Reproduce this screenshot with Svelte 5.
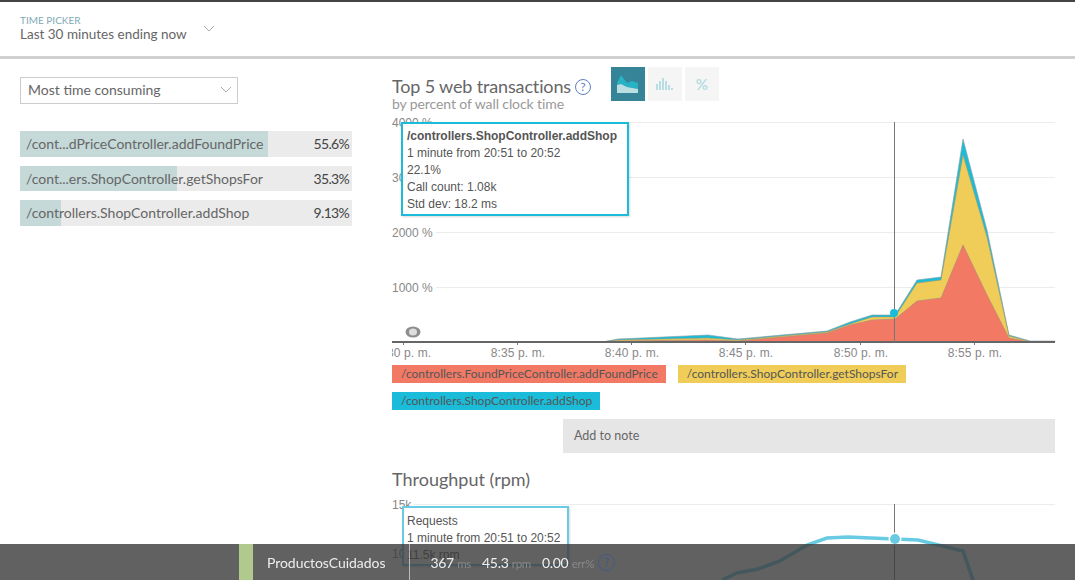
<script>
	let transactions = [
		{ name: "/cont...dPriceController.addFoundPrice", pct: "55.6%", width: 74.7 },
		{ name: "/cont...ers.ShopController.getShopsFor", pct: "35.3%", width: 47.3 },
		{ name: "/controllers.ShopController.addShop", pct: "9.13%", width: 12.3 },
	];

	let legend = [
		{ name: "/controllers.FoundPriceController.addFoundPrice", color: "#f27a65" },
		{ name: "/controllers.ShopController.getShopsFor", color: "#efcd58" },
		{ name: "/controllers.ShopController.addShop", color: "#1abcd9" },
	];

	// chart coordinates: x starts at page x=392, y at page y=122
	const bluePts = "210,220 226,217 316,213 346,217 435,209 458,200 480,193 503,193 525,158 549,155 571,17 595,108 617,213 638,219 663,219";
	const yellowPts = "210,220 226,218 316,216 346,218 435,210 458,202 480,195 503,195 525,161 549,158 571,33 595,115 617,214 638,219.5 663,220";
	const redPts = "210,220 226,219 316,218 346,219 435,211 458,203 480,198 503,197 525,179 549,176 571,123 595,173 617,216 638,220 663,220";
	const close = "663,220 210,220";

	const ticks = [
		{ x: 12, label: "8:30 p. m." },
		{ x: 126, label: "8:35 p. m." },
		{ x: 240, label: "8:40 p. m." },
		{ x: 354, label: "8:45 p. m." },
		{ x: 469, label: "8:50 p. m." },
		{ x: 583, label: "8:55 p. m." },
	];
</script>

<div class="page">
	<header>
		<div class="picker">
			<span class="picker-label">TIME PICKER</span>
			<span class="picker-value">Last 30 minutes ending now</span>
		</div>
		<svg class="chev" width="12" height="7" viewBox="0 0 12 7"><path d="M1 1l5 5 5-5" /></svg>
	</header>

	<div class="content">
		<aside>
			<div class="select">
				<span>Most time consuming</span>
				<svg class="chev" width="12" height="7" viewBox="0 0 12 7"><path d="M1 1l5 5 5-5" /></svg>
			</div>
			<ul>
				{#each transactions as t}
					<li>
						<div class="fill" style="width: {t.width}%"></div>
						<span class="name">{t.name}</span>
						<span class="pct">{t.pct}</span>
					</li>
				{/each}
			</ul>
		</aside>

		<main>
			<div class="title-row">
				<div class="titles">
					<h2>Top 5 web transactions<span class="help">?</span></h2>
					<p>by percent of wall clock time</p>
				</div>
				<div class="toggles">
					<button class="active" aria-label="Area">
						<svg width="21" height="18" viewBox="0 0 21 18">
							<path d="M0 8L4 0l6 8 5-2 6 2v6l-11-2-6-3-4 1z" fill="#27b3c4" />
							<path d="M0 10l4-1 6 3 11 2v4H0z" fill="#b9dfe3" />
						</svg>
					</button>
					<button aria-label="Bars">
						<svg width="17" height="12" viewBox="0 0 17 12">
							<path d="M0 6h2v6H0zM3 3h2v9H3zM6 0h2v12H6zM9 3h2v9H9zM12 7h2v5h-2zM15 10h2v2h-2z" fill="#b8dde2" />
						</svg>
					</button>
					<button class="pct-btn">%</button>
				</div>
			</div>

			<div class="chart">
				<svg class="plot" width="683" height="240" viewBox="0 0 683 240">
					{#each [0, 55, 110, 165] as y}
						<line x1="0" x2="663" y1={y + 0.5} y2={y + 0.5} stroke="#ececec" />
					{/each}
					<polygon points="{bluePts} {close}" fill="#1abcd9" stroke="#8a9ca0" stroke-width="0.6" />
					<polygon points="{yellowPts} {close}" fill="#efcd58" stroke="#a09a70" stroke-width="0.6" />
					<polygon points="{redPts} {close}" fill="#f27a65" stroke="#a88a80" stroke-width="0.6" />
					<line x1="0" x2="663" y1="220" y2="220" stroke="#666" stroke-width="2" />
					{#each ticks as t}
						<line x1={t.x - 0.5} x2={t.x - 0.5} y1="221" y2="223" stroke="#777" />
					{/each}
					<line x1="502.5" x2="502.5" y1="0" y2="220" stroke="#777" />
					<circle cx="502" cy="191" r="4" fill="#1abcd9" />
					<ellipse cx="21" cy="210" rx="7.5" ry="5.5" fill="#8e8e8e" />
					<ellipse cx="21" cy="210" rx="4" ry="3.5" fill="#dedede" />
				</svg>

				<span class="y-label" style="top: -6px">4000 %</span>
				<span class="y-label" style="top: 49px">3000 %</span>
				<span class="y-label" style="top: 104px">2000 %</span>
				<span class="y-label" style="top: 159px">1000 %</span>

				<div class="x-axis">
					{#each ticks as t}
						<span style="left: {t.x}px">{t.label}</span>
					{/each}
				</div>

				<div class="tip tip-top">
					<b>/controllers.ShopController.addShop</b>
					<span>1 minute from 20:51 to 20:52</span>
					<span>22.1%</span>
					<span>Call count: 1.08k</span>
					<span>Std dev: 18.2 ms</span>
				</div>
			</div>

			<div class="legend">
				{#each legend as l}
					<span style="background: {l.color}">{l.name}</span>
				{/each}
			</div>

			<div class="note">Add to note</div>

			<h2 class="second">Throughput (rpm)</h2>
			<div class="chart small">
				<svg class="plot" width="663" height="90" viewBox="0 0 663 90">
					<line x1="13" x2="663" y1="0.5" y2="0.5" stroke="#ececec" />
					<polyline points="330,76 345,69 366,65 388,57 415,41 435,34 456,33 502,35 526,36 571,47 581,76" fill="none" stroke="#68cbe3" stroke-width="3.5" />
					<line x1="502.5" x2="502.5" y1="0" y2="90" stroke="#777" />
					<circle cx="503" cy="35" r="6.5" fill="#fff" />
					<circle cx="503" cy="35" r="5" fill="#68cbe3" />
				</svg>
				<span class="y-label" style="top: -6px">15k</span>
				<span class="y-label" style="top: 43px">10</span>
				<div class="tip tip-bottom">
					<span>Requests</span>
					<span>1 minute from 20:51 to 20:52</span>
					<span>11.5k rpm</span>
				</div>
			</div>
		</main>
	</div>

	<footer>
		<i class="status"></i>
		<span class="app">ProductosCuidados</span>
		<i class="cursor"></i>
		<span class="stat first">367 <small>ms</small></span>
		<span class="stat">45.3 <small>rpm</small></span>
		<span class="stat last">0.00 <small>err%</small></span>
		<span class="help dark">?</span>
	</footer>
</div>

<style>
	:global(body) {
		margin: 0;
		background: #fff;
		overflow: hidden;
	}

	.page {
		height: 580px;
		overflow: hidden;
		font-family: Lato, "Noto Sans", sans-serif;
		color: #666;
	}

	header {
		display: flex;
		align-items: center;
		gap: 16px;
		box-sizing: border-box;
		height: 59px;
		padding: 0 0 5px 20px;
		border-top: 2px solid #444;
		border-bottom: 3px solid #d0d0d0;
	}

	.picker {
		display: flex;
		flex-direction: column;
		line-height: 14px;
	}

	.picker-label {
		font-size: 10px;
		color: #7faab5;
	}

	.picker-value {
		font-size: 13.5px;
		color: #666;
	}

	.chev {
		fill: none;
		stroke: #aaa;
	}

	header .chev {
		margin-top: 3px;
	}

	.content {
		display: flex;
		padding: 18px 20px 0;
		gap: 40px;
	}

	aside {
		flex: 0 0 332px;
	}

	.select {
		display: flex;
		align-items: center;
		justify-content: space-between;
		box-sizing: border-box;
		width: 218px;
		height: 27px;
		padding: 0 5px 2px 7px;
		border: 1px solid #ccc;
		font-size: 14px;
		color: #666;
	}

	ul {
		list-style: none;
		margin: 27px 0 0;
		padding: 0;
		display: flex;
		flex-direction: column;
		gap: 9px;
	}

	li {
		position: relative;
		display: flex;
		justify-content: space-between;
		align-items: center;
		height: 25.5px;
		padding: 0 3px 0 6px;
		background: #ebebeb;
		font-size: 14px;
		color: #666;
	}

	.fill {
		position: absolute;
		left: 0;
		top: 0;
		bottom: 0;
		background: #c4d9d8;
	}

	.name,
	.pct {
		position: relative;
	}

	.pct {
		color: #444;
		letter-spacing: -0.7px;
	}

	main {
		flex: 1;
		min-width: 0;
	}

	.title-row {
		display: flex;
		gap: 20px;
		margin-top: -10px;
	}

	.titles {
		padding-top: 8px;
	}

	h2 {
		margin: 0;
		font-size: 18px;
		font-weight: 400;
		line-height: 22px;
		color: #666;
	}

	.titles h2 {
		letter-spacing: -0.15px;
	}

	.titles p {
		margin: 0;
		font-size: 14px;
		line-height: 14px;
		letter-spacing: -0.1px;
		color: #999;
	}

	.help {
		display: inline-block;
		box-sizing: border-box;
		width: 16px;
		height: 16px;
		margin-left: 4px;
		border: 1px solid #5f7fc0;
		border-radius: 50%;
		font-size: 12px;
		line-height: 14px;
		text-align: center;
		color: #5f7fc0;
		vertical-align: 2px;
	}

	.toggles {
		display: flex;
		gap: 3px;
	}

	button {
		display: flex;
		align-items: center;
		justify-content: center;
		width: 34px;
		height: 34px;
		padding: 0;
		border: 0;
		background: #f5f5f5;
	}

	button.active {
		background: #358498;
	}

	.pct-btn {
		font-family: Lato, sans-serif;
		font-weight: 700;
		font-size: 15px;
		color: #b8dde2;
	}

	.chart {
		position: relative;
		height: 240px;
		margin-top: 11px;
		font-family: "Liberation Sans", sans-serif;
	}

	.plot {
		display: block;
	}

	.y-label {
		position: absolute;
		left: 0;
		font-size: 12px;
		line-height: 14px;
		padding-right: 3px;
		background: #fff;
		color: #888;
	}

	.x-axis {
		position: absolute;
		top: 224px;
		left: 0;
		width: 663px;
		height: 16px;
		overflow: hidden;
		font-size: 12px;
		line-height: 14px;
		letter-spacing: 0.1px;
		color: #888;
	}

	.x-axis span {
		position: absolute;
		transform: translateX(-50%);
		white-space: nowrap;
	}

	.tip {
		position: absolute;
		display: flex;
		flex-direction: column;
		box-sizing: border-box;
		padding: 4px 3px 0 4px;
		background: rgba(255, 255, 255, 0.9);
		font-size: 12px;
		line-height: 17px;
		color: #555;
		box-shadow: 1px 1px 2px rgba(0, 0, 0, 0.15);
	}

	.tip-top {
		left: 9px;
		top: 0;
		width: 228px;
		height: 94px;
		border: 2px solid #1abcd9;
	}

	.tip-bottom {
		left: 10px;
		top: 2px;
		width: 167px;
		height: 60px;
		padding: 5px 3px 0 3px;
		border: 2px solid #68cbe3;
	}

	.legend {
		display: flex;
		flex-wrap: wrap;
		gap: 9px 12px;
		margin-top: 3px;
	}

	.legend span {
		height: 18px;
		padding: 0 8px 0 9px;
		font-size: 12px;
		line-height: 18px;
		color: #555;
	}

	.note {
		box-sizing: border-box;
		height: 34px;
		margin: 9px 0 0 171px;
		padding-left: 11px;
		background: #e6e6e6;
		font-size: 12.5px;
		line-height: 34px;
		color: #666;
	}

	.second {
		margin-top: 15px;
	}

	.small {
		height: 90px;
		margin-top: 14px;
	}

	footer {
		position: fixed;
		left: 0;
		right: 0;
		bottom: 0;
		display: flex;
		align-items: center;
		height: 36px;
		background: rgba(58, 58, 58, 0.8);
		color: #eee;
	}

	.status {
		width: 14px;
		height: 36px;
		margin-left: 239px;
		background: #b0ca8d;
	}

	.app {
		margin-left: 14px;
		font-size: 14px;
		letter-spacing: -0.05px;
	}

	.cursor {
		position: absolute;
		left: 409px;
		top: 0;
		width: 1px;
		height: 36px;
		background: #bbb;
	}

	.stat {
		margin-right: 11px;
		font-size: 14px;
		letter-spacing: -0.3px;
	}

	.stat.first {
		margin-left: 45px;
	}

	.stat.last {
		margin-right: 4px;
	}

	.stat small {
		font-size: 11.5px;
		color: #888;
	}

	.help.dark {
		width: 17px;
		height: 17px;
		margin: 0;
		border-color: #3e5a8c;
		color: #3e5a8c;
		vertical-align: 0;
	}
</style>
